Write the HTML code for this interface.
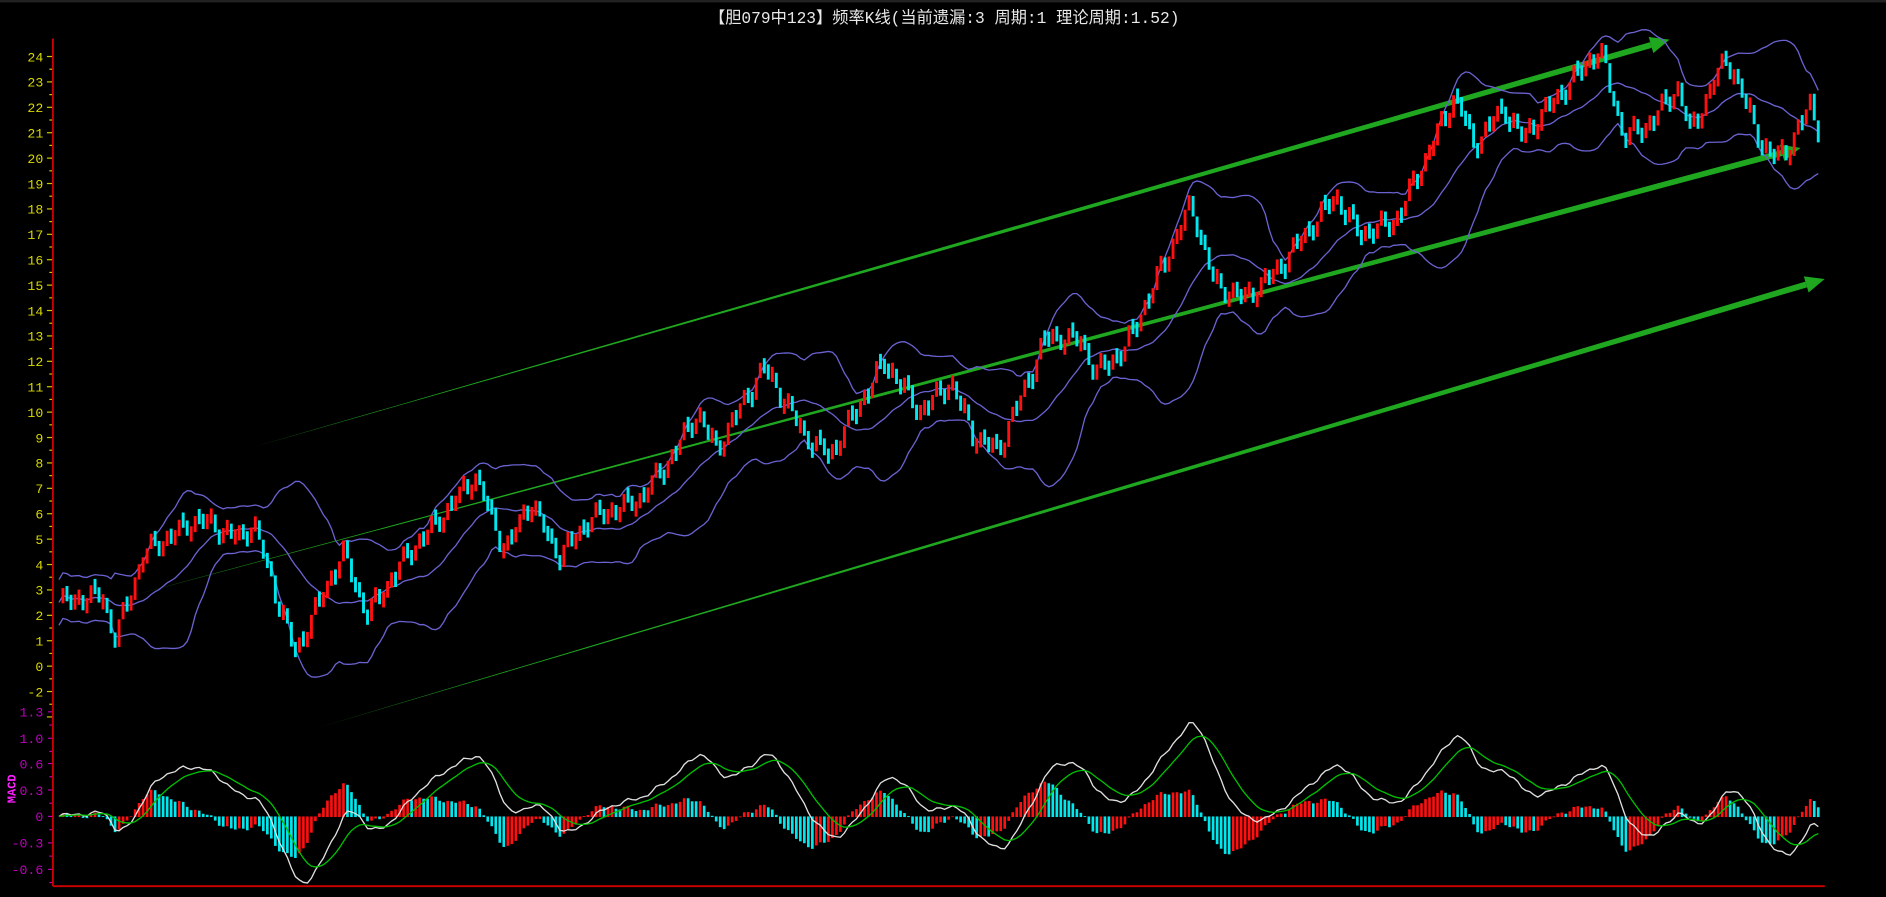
<!DOCTYPE html>
<html><head><meta charset="utf-8"><style>
html,body{margin:0;padding:0;background:#000;width:1886px;height:897px;overflow:hidden}
svg{display:block}
text{font-family:"Liberation Mono","Noto Sans CJK SC",monospace}
</style></head><body>
<svg id="s" width="1886" height="897" viewBox="0 0 1568 746" preserveAspectRatio="none" xmlns="http://www.w3.org/2000/svg">
<rect width="1568" height="746" fill="#000"/>
<rect width="1568" height="2" fill="#222"/>
<text x="785" y="19" fill="#e8e8e8" font-size="13.5" text-anchor="middle">【胆079中123】频率K线(当前遗漏:3 周期:1 理论周期:1.52)</text>
<g id="axis"></g>
<g id="arrows"></g>
<g id="bands" fill="none" stroke="#6a62d0" stroke-width="1.1"></g>
<g id="candles"></g>
<g id="macd"></g>
<line x1="44" y1="32" x2="44" y2="737" stroke="#d00000" stroke-width="1.5"/>
<line x1="44" y1="737" x2="1517" y2="737" stroke="#d00000" stroke-width="1.5"/>
<text x="13" y="668" fill="#ff20ff" font-size="10" font-weight="bold" transform="rotate(-90 13 668)" font-family="Liberation Serif,serif">MACD</text>
</svg>
<script>
const NS="http://www.w3.org/2000/svg";
function el(p,t,a){const e=document.createElementNS(NS,t);for(const k in a)e.setAttribute(k,a[k]);p.appendChild(e);return e;}
const py=v=>554-v*21.125, my=m=>679-m*73.3;
const ax=document.getElementById('axis');
for(let v=24;v>=-2;v-=0.5){const y=py(v);el(ax,'line',{x1:v%1?41:39,y1:y,x2:44,y2:y,stroke:'#c8c800','stroke-width':1});}
for(let v=24;v>=0;v--){el(ax,'text',{x:36,y:py(v)+4,fill:'#d8d800','font-size':11,'text-anchor':'end'}).textContent=v;}
el(ax,'text',{x:36,y:py(-1)+4,fill:'#d8d800','font-size':11,'text-anchor':'end'}).textContent='-2';
const ml=[[1.3,592],[1.0,614],[0.6,635],[0.3,657],[0,679],[-0.3,701],[-0.6,723]];
ml.forEach(([v,y])=>{el(ax,'text',{x:36,y:y+4,fill:'#c000c0','font-size':11,'text-anchor':'end'}).textContent=(v==0?'0':v.toFixed(1));el(ax,'line',{x1:40,y1:y,x2:44,y2:y,stroke:'#c000c0'});el(ax,'line',{x1:41,y1:y+11,x2:44,y2:y+11,stroke:'#c000c0'});});
const ar=document.getElementById('arrows');
function arrow(x1,y1,x2,y2,w){const dx=x2-x1,dy=y2-y1,L=Math.hypot(dx,dy),ux=dx/L,uy=dy/L,nx=-uy,ny=ux;const hl=16,hw=7;const bx=x2-ux*hl,by=y2-uy*hl;
el(ar,'polygon',{points:`${x1},${y1} ${bx+nx*w/2},${by+ny*w/2} ${bx-nx*w/2},${by-ny*w/2}`,fill:'#1fa81f'});
el(ar,'polygon',{points:`${x2},${y2} ${bx+nx*hw},${by+ny*hw} ${bx-nx*hw},${by-ny*hw}`,fill:'#1fa81f'});}
arrow(210,372,1388,33,5);arrow(100,498,1497,123,5);arrow(265,605,1517,232,5);
const K=[[48,2.5],[85,2.8],[95,1],[120,4.5],[165,5.8],[200,5],[210,5.7],[245,0.5],[285,4.5],[305,2],[340,4.5],[360,5.5],[395,7.5],[420,4.5],[440,6.5],[465,4.3],[490,5.8],[530,6.5],[555,8],[580,10],[595,8.5],[635,11.8],[670,9],[690,8.3],[735,12],[765,10],[790,11.2],[810,9],[830,8.5],[870,13],[900,12.8],[910,11.5],[935,12.5],[990,18.2],[1010,15],[1035,14.5],[1060,15.5],[1110,18.5],[1130,17],[1160,17.5],[1210,22.5],[1225,20.5],[1250,22],[1265,20.8],[1300,22.7],[1330,24.3],[1350,20.8],[1370,21.3],[1395,22.8],[1405,21],[1435,24],[1470,20],[1490,20.5],[1505,22.3],[1515,20.5]];
function interp(x){for(let i=1;i<K.length;i++){if(x<=K[i][0]){const a=K[i-1],b=K[i];return a[1]+(b[1]-a[1])*(x-a[0])/(b[0]-a[0]);}}return K[K.length-1][1];}
const N=440,X=[],C=[];
for(let i=0;i<N;i++){const x=49+i*1466/N;X.push(x);C.push(interp(x)+0.35*Math.sin(i*1.7)+0.2*Math.sin(i*0.9));}
const cg=document.getElementById('candles');
for(let i=1;i<N;i++){let o=C[i-1],c=C[i];const up=c>=o;let lo=Math.min(o,c),hi=Math.max(o,c);if(hi-lo<0.6){const m=(hi+lo)/2;lo=m-0.3;hi=m+0.3;}
el(cg,'rect',{x:X[i]-1.2,y:py(hi),width:2.4,height:(hi-lo)*21.125,fill:up?'#ff1010':'#00e8ee'});}
const bg=document.getElementById('bands');const up=[],md=[],dn=[];
for(let i=0;i<N;i++){const s=Math.max(0,i-19),w=C.slice(s,i+1);const m=w.reduce((a,b)=>a+b,0)/w.length;const sd=Math.sqrt(w.reduce((a,b)=>a+(b-m)*(b-m),0)/w.length);const d=Math.max(sd*2,0.9);
md.push(X[i].toFixed(1)+','+py(m).toFixed(1));up.push(X[i].toFixed(1)+','+py(m+d).toFixed(1));dn.push(X[i].toFixed(1)+','+py(m-d).toFixed(1));}
[up,md,dn].forEach(p=>el(bg,'polyline',{points:p.join(' ')}));
const mg=document.getElementById('macd');
function ema(a,n){const k=2/(n+1);let r=[a[0]];for(let i=1;i<a.length;i++)r.push(r[i-1]+k*(a[i]-r[i-1]));return r;}
const e12=ema(C,12),e26=ema(C,26);const dif=C.map((_,i)=>(e12[i]-e26[i])*0.72);const dea=ema(dif,9);
const hist=dif.map((d,i)=>(d-dea[i])*1.3);
for(let i=1;i<N;i++){const h=hist[i];const col=h>=hist[i-1]?'#ff1010':'#00e8ee';el(mg,'rect',{x:X[i]-1.1,y:Math.min(my(0),my(h)),width:2.2,height:Math.abs(h*73.3)+0.5,fill:col});}
el(mg,'polyline',{points:dif.map((d,i)=>X[i].toFixed(1)+','+my(d).toFixed(1)).join(' '),fill:'none',stroke:'#e0e0e0','stroke-width':1.1});
el(mg,'polyline',{points:dea.map((d,i)=>X[i].toFixed(1)+','+my(d).toFixed(1)).join(' '),fill:'none',stroke:'#00c000','stroke-width':1.1});
</script>
</body></html>
